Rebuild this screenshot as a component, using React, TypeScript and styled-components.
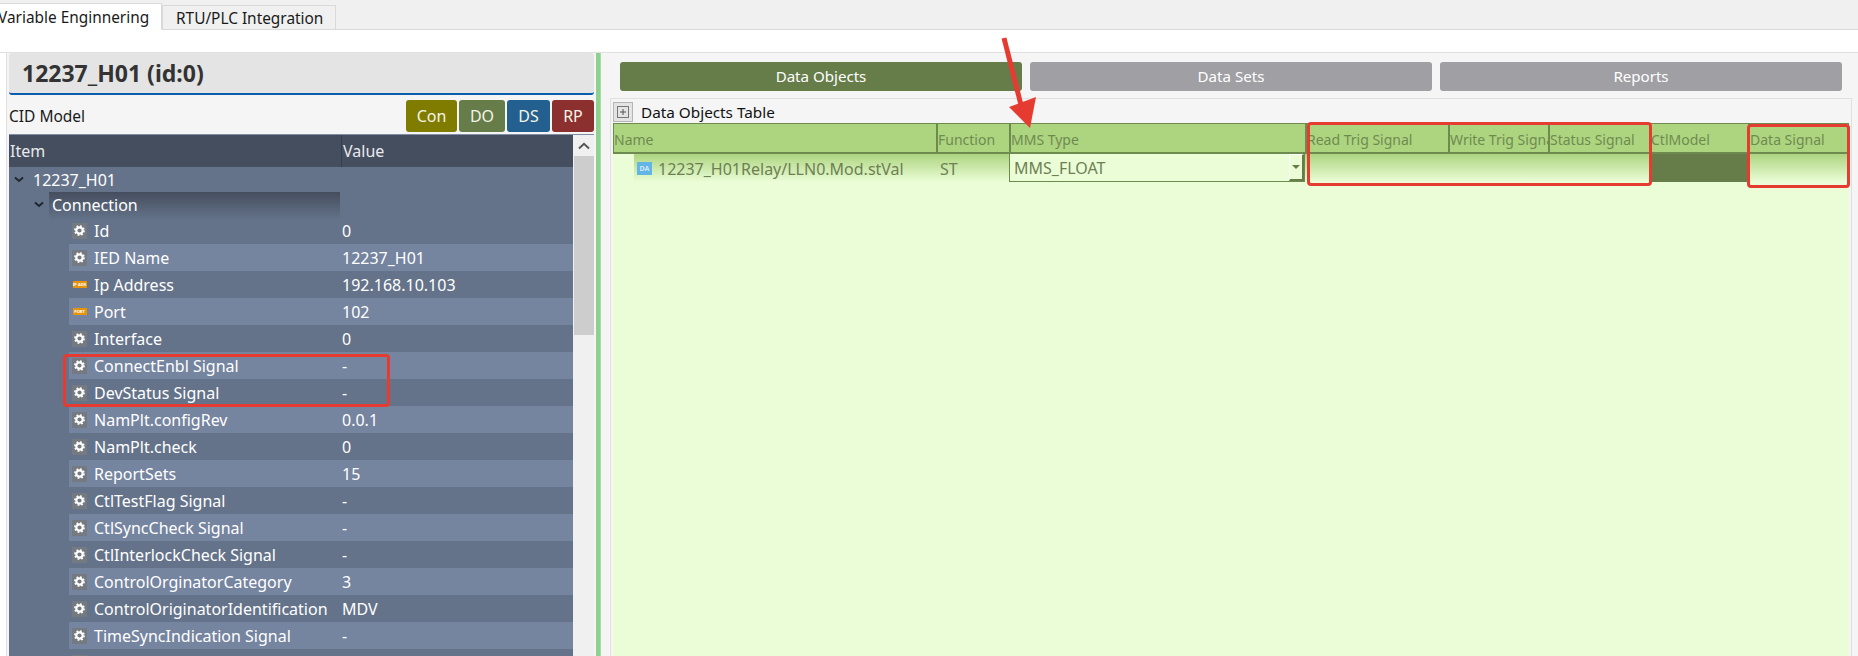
import React from 'react';
import styled, { createGlobalStyle } from 'styled-components';

const FONT = '"Noto Sans", "Open Sans", "Liberation Sans", sans-serif';

interface TreeRow {
  label: string;
  value: string;
  icon?: 'gear' | 'ip' | 'port';
}

const rows: TreeRow[] = [
  { label: 'Id', value: '0' },
  { label: 'IED Name', value: '12237_H01' },
  { label: 'Ip Address', value: '192.168.10.103', icon: 'ip' },
  { label: 'Port', value: '102', icon: 'port' },
  { label: 'Interface', value: '0' },
  { label: 'ConnectEnbl Signal', value: '-' },
  { label: 'DevStatus Signal', value: '-' },
  { label: 'NamPlt.configRev', value: '0.0.1' },
  { label: 'NamPlt.check', value: '0' },
  { label: 'ReportSets', value: '15' },
  { label: 'CtlTestFlag Signal', value: '-' },
  { label: 'CtlSyncCheck Signal', value: '-' },
  { label: 'CtlInterlockCheck Signal', value: '-' },
  { label: 'ControlOrginatorCategory', value: '3' },
  { label: 'ControlOriginatorIdentification', value: 'MDV' },
  { label: 'TimeSyncIndication Signal', value: '-' },
  { label: 'Address', value: '' },
];

const COLUMNS = '322px 73px 296px 143px 100px 101px 99px 100px';

const Global = createGlobalStyle`
  html, body {
    margin: 0;
    padding: 0;
    background: #fff;
    overflow: hidden;
  }
  * {
    box-sizing: border-box;
  }
`;

const Page = styled.div`
  position: relative;
  width: 1858px;
  height: 656px;
  overflow: hidden;
  background: #fff;
  font-family: ${FONT};
  display: flex;
  flex-direction: column;
`;

const TabBar = styled.div`
  height: 30px;
  flex: none;
  display: flex;
  align-items: flex-end;
  background: #f0f0f0;
  border-bottom: 1px solid #d9d9d9;
`;

const Tab = styled.div<{ $active?: boolean }>`
  height: ${(p) => (p.$active ? '27px' : '25px')};
  margin-bottom: -1px;
  padding-top: 1px;
  display: flex;
  align-items: center;
  white-space: nowrap;
  overflow: hidden;
  font-size: 15.4px;
  color: #1a1a1a;
  border: 1px solid #d9d9d9;
  border-left-width: ${(p) => (p.$active ? 0 : '1px')};
  border-bottom-color: ${(p) => (p.$active ? '#fff' : '#d9d9d9')};
  background: ${(p) => (p.$active ? '#fff' : '#f0f0f0')};
  width: ${(p) => (p.$active ? '162px' : '174px')};
  padding-left: ${(p) => (p.$active ? '0' : '13px')};
  text-indent: ${(p) => (p.$active ? '-2px' : '0')};
`;

const Main = styled.div`
  margin-top: 22px;
  flex: 1;
  min-height: 0;
  display: flex;
  border-top: 1px solid #e0e0e0;
`;

const LeftPanel = styled.div`
  margin-left: 6px;
  width: 590px;
  flex: none;
  background: #f5f5f5;
  border-left: 1px solid #e0e0e0;
  padding: 0 2px 0 2px;
  display: flex;
  flex-direction: column;
  overflow: hidden;
`;

const TitleBar = styled.div`
  height: 42px;
  flex: none;
  background: #e4e4e4;
  border-bottom: 2px solid #0a5cad;
  border-radius: 3px;
  padding-left: 13px;
  display: flex;
  align-items: center;
  font-size: 23px;
  font-weight: 700;
  color: #333;
`;

const ModelRow = styled.div`
  height: 39px;
  flex: none;
  padding: 5px 0 2px;
  display: flex;
  align-items: center;
  justify-content: space-between;
`;

const ModelLabel = styled.span`
  font-size: 15.5px;
  color: #1a1a1a;
`;

const ModelButtons = styled.div`
  display: flex;
  gap: 2px;
`;

const ModelButton = styled.div<{ $color: string; $width: number }>`
  width: ${(p) => p.$width}px;
  height: 32px;
  border-radius: 3px;
  background: ${(p) => p.$color};
  color: #f4f4e6;
  font-size: 16px;
  display: flex;
  align-items: center;
  justify-content: center;
`;

const Tree = styled.div`
  flex: 1;
  min-height: 0;
  display: flex;
  border-top: 1px solid #7f8da5;
`;

const TreeBody = styled.div`
  width: 564px;
  flex: none;
  background: #64738a;
  color: #fff;
  font-size: 16px;
`;

const TreeHeader = styled.div`
  height: 32px;
  display: grid;
  grid-template-columns: 332px 1fr;
  background: #454e5e;
  color: #e8eaee;
`;

const HeaderCell = styled.div`
  display: flex;
  align-items: center;
  padding-left: 1px;
  border-left: 1px solid #363e4c;
  &:first-child {
    border-left: 0;
  }
`;

const RootRow = styled.div`
  height: 25px;
  padding: 0 0 0 5px;
  display: flex;
  align-items: center;
  gap: 9px;
`;

const GroupRow = styled.div`
  height: 25px;
  padding-left: 25px;
  display: flex;
  align-items: center;
  gap: 5px;
`;

const GroupLabel = styled.div`
  width: 291px;
  height: 28px;
  margin-top: 3px;
  padding: 0 0 3px 3px;
  display: flex;
  align-items: center;
  background: linear-gradient(#454e5e, #64738a);
`;

const Row = styled.div<{ $band: boolean }>`
  height: 27px;
  margin-left: 60px;
  display: grid;
  grid-template-columns: 271px 1fr;
  align-items: center;
  background: ${(p) => (p.$band ? '#75849f' : 'transparent')};
`;

const RowName = styled.div`
  display: flex;
  align-items: center;
  white-space: nowrap;
  padding-left: 3px;
`;

const IconSlot = styled.span`
  width: 15px;
  height: 16px;
  margin-right: 7px;
  display: flex;
  align-items: center;
  justify-content: center;
  flex: none;
`;

const TagIcon = styled.span`
  width: 14px;
  height: 7px;
  background: #e8930c;
  color: #fff;
  font-size: 4px;
  font-weight: 700;
  line-height: 7px;
  text-align: center;
  white-space: nowrap;
`;

const RowValue = styled.div`
  padding-left: 2px;
`;

const ScrollBar = styled.div`
  width: 21px;
  flex: none;
  background: #f0f0f0;
  border-left: 1px solid #f0f0f0;
  display: flex;
  flex-direction: column;
`;

const ScrollUp = styled.div`
  height: 21px;
  display: flex;
  align-items: center;
  justify-content: center;
`;

const ScrollThumb = styled.div`
  height: 179px;
  background: #cdcdcd;
`;

const Divider = styled.div`
  width: 5px;
  flex: none;
  background: #8ed08e;
  border-right: 1px solid #a8dca8;
`;

const RightPanel = styled.div`
  flex: 1;
  min-width: 0;
  background: #f5f5f5;
  padding: 9px 6px 0 9px;
  display: flex;
  flex-direction: column;
`;

const ViewTabs = styled.div`
  height: 29px;
  flex: none;
  margin: 0 9px 0 10px;
  display: grid;
  grid-template-columns: 402px 402px 402px;
  column-gap: 8px;
`;

const ViewTab = styled.div<{ $active?: boolean }>`
  border-radius: 3px;
  background: ${(p) => (p.$active ? '#667d4a' : '#a09fa4')};
  color: #fff;
  font-size: 15.1px;
  padding-bottom: 2px;
  display: flex;
  align-items: center;
  justify-content: center;
`;

const GroupBox = styled.div`
  margin-top: 7px;
  flex: 1;
  min-height: 0;
  border: 1px solid #e0e0e0;
  border-bottom: 0;
  padding: 2px 2px 0 2px;
  display: flex;
  flex-direction: column;
`;

const GroupHead = styled.div`
  height: 22px;
  flex: none;
  display: flex;
  align-items: center;
  gap: 8px;
  font-size: 15.3px;
  color: #111;
`;

const Toggle = styled.div`
  width: 20px;
  height: 20px;
  background: #e4e4e4;
  border: 1px solid #b5b5b5;
  display: flex;
  align-items: center;
  justify-content: center;
`;

const Table = styled.div`
  flex: 1;
  min-height: 0;
  background: #ebfdd7;
  color: #6d8052;
  font-size: 16px;
`;

const TableHead = styled.div`
  height: 31px;
  display: grid;
  grid-template-columns: ${COLUMNS};
  background: #add580;
  border: 1px solid #6d8a4f;
  border-bottom-width: 2px;
  font-size: 14px;
  color: #6f8a50;
`;

const Th = styled.div`
  display: flex;
  align-items: center;
  padding: 2px 0 0 0;
  white-space: nowrap;
  overflow: hidden;
  border-left: 2px solid #6d8a4f;
  &:first-child {
    border-left: 0;
  }
`;

const TableRow = styled.div`
  height: 28px;
  padding: 0 1px;
  display: grid;
  grid-template-columns: ${COLUMNS};
`;

const fade = 'linear-gradient(#add580, #ebfdd7)';

const NameCell = styled.div`
  margin-left: 20px;
  background: ${fade};
  display: flex;
  align-items: center;
  gap: 6px;
  padding: 1px 0 0 3px;
  white-space: nowrap;
`;

const DaIcon = styled.span`
  width: 15px;
  height: 13px;
  background: #63b5e6;
  color: #cfe6f5;
  font-size: 7px;
  font-weight: 700;
  line-height: 13px;
  text-align: center;
`;

const FunctionCell = styled.div`
  background: ${fade};
  display: flex;
  align-items: center;
  padding: 1px 0 0 4px;
`;

const ComboCell = styled.div`
  position: relative;
  background: #ebfdd7;
  border: 1px solid #6d8a4f;
  border-top: 0;
  display: flex;
  align-items: center;
  padding: 1px 0 0 4px;
`;

const ComboArrow = styled.div`
  position: absolute;
  right: 0;
  top: 0;
  bottom: 0;
  width: 15px;
  background: #ebfdd7;
  border: 1px solid #fff;
  border-right: 2px solid #667d4a;
  border-bottom: 2px solid #667d4a;
  display: flex;
  align-items: center;
  justify-content: center;
`;

const ComboCaret = styled.span`
  width: 0;
  height: 0;
  border-left: 4px solid transparent;
  border-right: 4px solid transparent;
  border-top: 4px solid #667d4a;
`;

const FadeCell = styled.div`
  background: ${fade};
`;

const DarkCell = styled.div`
  background: #667d4a;
`;

const Mark = styled.div<{ $x: number; $y: number; $w: number; $h: number }>`
  position: absolute;
  left: ${(p) => p.$x}px;
  top: ${(p) => p.$y}px;
  width: ${(p) => p.$w}px;
  height: ${(p) => p.$h}px;
  border: 3px solid #e53b30;
  border-radius: 4px;
`;

const Arrow = styled.svg`
  position: absolute;
  left: 995px;
  top: 30px;
`;

const Gear = () => (
  <svg width="15" height="16" viewBox="0 0 15 16">
    <rect width="15" height="16" fill="#757a80" />
    <circle cx="7.5" cy="7.5" r="3.2" fill="none" stroke="#fff" strokeWidth="2.2" />
    <circle cx="7.5" cy="7.5" r="4.6" fill="none" stroke="#fff" strokeWidth="1.6" strokeDasharray="1.8 1.8" />
  </svg>
);

const Chevron = ({ color = '#20262f' }: { color?: string }) => (
  <svg width="10" height="7" viewBox="0 0 10 7">
    <path d="M1 1.5 L5 5 L9 1.5" fill="none" stroke={color} strokeWidth="2" />
  </svg>
);

const RowIcon = ({ icon }: { icon?: TreeRow['icon'] }) => {
  if (icon === 'ip') return <TagIcon>IP ADR</TagIcon>;
  if (icon === 'port') return <TagIcon>PORT</TagIcon>;
  return <Gear />;
};

export default function App() {
  return (
    <Page>
      <Global />
      <TabBar>
        <Tab $active>Variable Enginnering</Tab>
        <Tab>RTU/PLC Integration</Tab>
      </TabBar>
      <Main>
        <LeftPanel>
          <TitleBar>12237_H01 (id:0)</TitleBar>
          <ModelRow>
            <ModelLabel>CID Model</ModelLabel>
            <ModelButtons>
              <ModelButton $color="#7f7c00" $width={51}>Con</ModelButton>
              <ModelButton $color="#667d4a" $width={46}>DO</ModelButton>
              <ModelButton $color="#24608f" $width={43}>DS</ModelButton>
              <ModelButton $color="#8b2f2f" $width={42}>RP</ModelButton>
            </ModelButtons>
          </ModelRow>
          <Tree>
            <TreeBody>
              <TreeHeader>
                <HeaderCell>Item</HeaderCell>
                <HeaderCell>Value</HeaderCell>
              </TreeHeader>
              <RootRow>
                <Chevron />
                <span>12237_H01</span>
              </RootRow>
              <GroupRow>
                <Chevron />
                <GroupLabel>Connection</GroupLabel>
              </GroupRow>
              {rows.map((row, i) => (
                <Row key={row.label} $band={i % 2 === 1}>
                  <RowName>
                    <IconSlot>
                      <RowIcon icon={row.icon} />
                    </IconSlot>
                    {row.label}
                  </RowName>
                  <RowValue>{row.value}</RowValue>
                </Row>
              ))}
            </TreeBody>
            <ScrollBar>
              <ScrollUp>
                <svg width="12" height="8" viewBox="0 0 12 8">
                  <path d="M1 6.5 L6 1.8 L11 6.5" fill="none" stroke="#555" strokeWidth="2" />
                </svg>
              </ScrollUp>
              <ScrollThumb />
            </ScrollBar>
          </Tree>
        </LeftPanel>
        <Divider />
        <RightPanel>
          <ViewTabs>
            <ViewTab $active>Data Objects</ViewTab>
            <ViewTab>Data Sets</ViewTab>
            <ViewTab>Reports</ViewTab>
          </ViewTabs>
          <GroupBox>
            <GroupHead>
              <Toggle>
                <svg width="12" height="12" viewBox="0 0 12 12">
                  <rect x="0.5" y="0.5" width="11" height="11" fill="#e4e4e4" stroke="#777" />
                  <path d="M3 6 H9 M6 3 V9" stroke="#555" />
                </svg>
              </Toggle>
              Data Objects Table
            </GroupHead>
            <Table>
              <TableHead>
                <Th>Name</Th>
                <Th>Function</Th>
                <Th>MMS Type</Th>
                <Th>Read Trig Signal</Th>
                <Th>Write Trig Signal</Th>
                <Th>Status Signal</Th>
                <Th>CtlModel</Th>
                <Th>Data Signal</Th>
              </TableHead>
              <TableRow>
                <NameCell>
                  <DaIcon>DA</DaIcon>
                  12237_H01Relay/LLN0.Mod.stVal
                </NameCell>
                <FunctionCell>ST</FunctionCell>
                <ComboCell>
                  MMS_FLOAT
                  <ComboArrow>
                    <ComboCaret />
                  </ComboArrow>
                </ComboCell>
                <FadeCell />
                <FadeCell />
                <FadeCell />
                <DarkCell />
                <FadeCell />
              </TableRow>
            </Table>
          </GroupBox>
        </RightPanel>
      </Main>
      <Mark $x={63} $y={354} $w={327} $h={53} />
      <Mark $x={1307} $y={122} $w={345} $h={64} />
      <Mark $x={1747} $y={124} $w={103} $h={64} />
      <Arrow width="50" height="100" viewBox="995 30 50 100">
        <path d="M1004 38 L1021 105" stroke="#e53b30" strokeWidth="5" fill="none" />
        <path d="M1009 107 L1036 97 L1030 128 Z" fill="#e53b30" />
      </Arrow>
    </Page>
  );
}
